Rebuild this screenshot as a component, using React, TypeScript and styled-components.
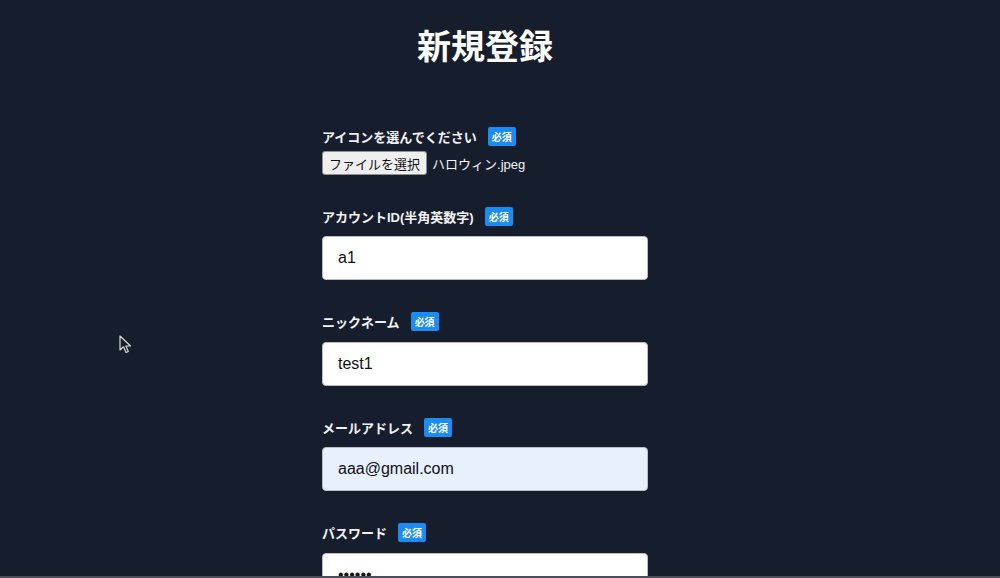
import React from "react";
import styled, { createGlobalStyle } from "styled-components";

const GlobalStyle = createGlobalStyle`
  html, body {
    margin: 0;
    padding: 0;
    background: #161e2e;
    height: 100%;
    overflow: hidden;
  }
  body {
    font-family: "Liberation Sans", "Noto Sans CJK JP", sans-serif;
    color: #ffffff;
  }
`;

const Page = styled.main`
  width: 970px;
  min-height: 578px;
  display: flex;
  flex-direction: column;
  align-items: center;
  padding-top: 22px;
  box-sizing: border-box;
`;

const Title = styled.h1`
  margin: 0;
  font-size: 34px;
  line-height: 46px;
  font-weight: 700;
  font-family: "Noto Sans CJK JP", sans-serif;
  color: #ffffff;
`;

const Form = styled.form`
  width: 326px;
  margin-top: 58px;
  display: flex;
  flex-direction: column;
  gap: 31.4px;
`;

const Field = styled.div<{ $gap: number }>`
  display: flex;
  flex-direction: column;
  gap: ${(p) => p.$gap}px;
`;

const LabelRow = styled.div`
  display: flex;
  align-items: center;
  height: 20px;
  gap: 11px;
`;

const Label = styled.label`
  font-family: "Liberation Sans", "Noto Sans CJK JP", sans-serif;
  font-size: 13px;
  font-weight: 700;
  color: #f2f2f2;
`;

const Badge = styled.span`
  display: inline-flex;
  align-items: center;
  justify-content: center;
  height: 19px;
  padding: 0 4px;
  border-radius: 2px;
  background: #1b8cf2;
  color: #ffffff;
  font-family: "Noto Sans CJK JP", sans-serif;
  font-size: 10px;
  font-weight: 700;
`;

const FileRow = styled.div`
  display: flex;
  align-items: center;
  gap: 5px;
`;

const FileButton = styled.span`
  display: inline-flex;
  align-items: center;
  height: 24px;
  padding: 0 6px;
  box-sizing: border-box;
  background: #efefef;
  border: 1px solid #8f8f8f;
  border-radius: 3px;
  color: #111111;
  font-family: "Noto Sans CJK JP", sans-serif;
  font-size: 13px;
`;

const FileName = styled.span`
  font-family: "Liberation Sans", "Noto Sans CJK JP", sans-serif;
  font-size: 13px;
  color: #f5f5f5;
`;

const Input = styled.input<{ $autofill?: boolean }>`
  width: 326px;
  height: 44px;
  box-sizing: border-box;
  padding: 0 15px;
  border: 1px solid #b9bcc4;
  border-radius: 4px;
  background: ${(p) => (p.$autofill ? "#e8f0fe" : "#ffffff")};
  color: #111111;
  font-family: "Liberation Sans", sans-serif;
  font-size: 16px;
  outline: none;
`;

const Cursor = styled.svg`
  position: fixed;
  left: 119px;
  top: 335px;
  width: 13px;
  height: 19px;
`;

const BottomEdge = styled.div`
  position: fixed;
  left: 0;
  right: 0;
  bottom: 0;
  height: 2px;
  background: #4b4f57;
`;

type FieldDef = { label: string; type: string; value: string; autofill?: boolean };

const fields: FieldDef[] = [
  { label: "アカウントID(半角英数字)", type: "text", value: "a1" },
  { label: "ニックネーム", type: "text", value: "test1" },
  { label: "メールアドレス", type: "email", value: "aaa@gmail.com", autofill: true },
  { label: "パスワード", type: "password", value: "aaaaaa" },
];

export default function App() {
  return (
    <>
      <GlobalStyle />
      <Page>
        <Title>新規登録</Title>
        <Form onSubmit={(e) => e.preventDefault()}>
          <Field $gap={5}>
            <LabelRow>
              <Label>アイコンを選んでください</Label>
              <Badge>必須</Badge>
            </LabelRow>
            <FileRow>
              <FileButton>ファイルを選択</FileButton>
              <FileName>ハロウィン.jpeg</FileName>
            </FileRow>
          </Field>
          {fields.map((f) => (
            <Field $gap={10} key={f.label}>
              <LabelRow>
                <Label>{f.label}</Label>
                <Badge>必須</Badge>
              </LabelRow>
              <Input type={f.type} defaultValue={f.value} $autofill={f.autofill} readOnly />
            </Field>
          ))}
        </Form>
      </Page>
      <Cursor viewBox="0 0 13 19">
        <path
          d="M1 1 L1 15 L4.5 11.8 L7 17.5 L9.3 16.5 L6.9 11 L11.5 11 Z"
          fill="#1a1f2a"
          stroke="#d8d8d8"
          strokeWidth="1.2"
          strokeLinejoin="round"
        />
      </Cursor>
      <BottomEdge />
    </>
  );
}
